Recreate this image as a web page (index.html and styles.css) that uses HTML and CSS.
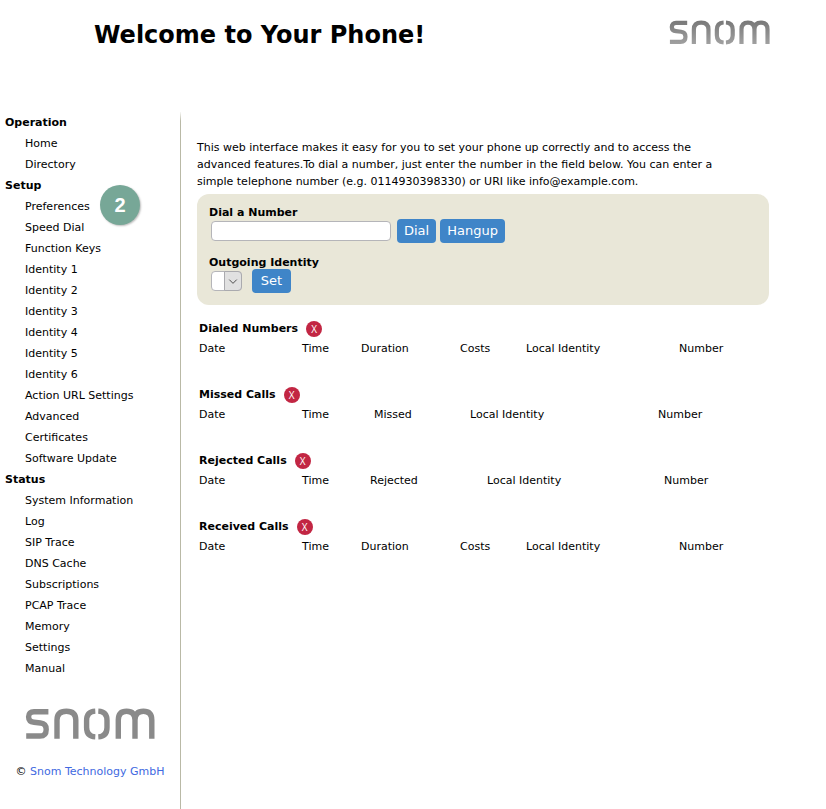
FILE: index.html
```
<!DOCTYPE html>
<html lang="en">
	<head>
		<title>Welcome to Your Phone!</title>
		<meta charset="UTF-8">
		<link rel="stylesheet" href="styles.css">
	</head>
	<body>
		<svg class="defs" width="0" height="0" aria-hidden="true">
			<linearGradient id="fade" x1="0" y1="0" x2="0" y2="32" gradientUnits="userSpaceOnUse">
				<stop offset="0" stop-color="#777"/>
				<stop offset="1" stop-color="#a2a2a2"/>
			</linearGradient>
			<symbol id="snom" viewBox="0 0 130 32">
				<path d="M23.4 3.7H9Q3.6 3.7 3.6 8.8Q3.6 13.8 9 14.3L15.5 15Q21.2 15.6 21.2 21.4Q21.2 28 15 28H1.2"/>
				<path d="M32 30.8V12Q32 3.2 41.4 3.2Q50.8 3.2 50.8 12V30.8"/>
				<path d="M70.3 3.1Q61.6 3.6 61.6 12.5V19.5Q61.6 28.4 70.3 28.9M73.3 3.1Q82 3.6 82 12.5V19.5Q82 28.4 73.3 28.9"/>
				<path d="M93.3 30.8V12Q93.3 3.2 101.6 3.2Q110 3.2 110 12V30.8M110 12Q110 3.2 118.4 3.2Q126.8 3.2 126.8 12V30.8"/>
			</symbol>
		</svg>

		<header class="header">
			<h1>Welcome to Your Phone!</h1>
			<svg class="logo logo-top" role="img" aria-label="snom"><use href="#snom"/></svg>
		</header>

		<div class="page">
			<nav class="menu">
				<h2>Operation</h2>
				<ul>
					<li><a href="#">Home</a></li>
					<li><a href="#">Directory</a></li>
				</ul>
				<h2>Setup</h2>
				<ul>
					<li class="marked"><a href="#">Preferences</a><span class="badge">2</span></li>
					<li><a href="#">Speed Dial</a></li>
					<li><a href="#">Function Keys</a></li>
					<li><a href="#">Identity 1</a></li>
					<li><a href="#">Identity 2</a></li>
					<li><a href="#">Identity 3</a></li>
					<li><a href="#">Identity 4</a></li>
					<li><a href="#">Identity 5</a></li>
					<li><a href="#">Identity 6</a></li>
					<li><a href="#">Action URL Settings</a></li>
					<li><a href="#">Advanced</a></li>
					<li><a href="#">Certificates</a></li>
					<li><a href="#">Software Update</a></li>
				</ul>
				<h2>Status</h2>
				<ul>
					<li><a href="#">System Information</a></li>
					<li><a href="#">Log</a></li>
					<li><a href="#">SIP Trace</a></li>
					<li><a href="#">DNS Cache</a></li>
					<li><a href="#">Subscriptions</a></li>
					<li><a href="#">PCAP Trace</a></li>
					<li><a href="#">Memory</a></li>
					<li><a href="#">Settings</a></li>
					<li><a href="#">Manual</a></li>
				</ul>
				<svg class="logo logo-menu" role="img" aria-label="snom"><use href="#snom"/></svg>
				<p class="copyright">© <a href="#">Snom Technology GmbH</a></p>
			</nav>

			<main class="content">
				<p class="intro">This web interface makes it easy for you to set your phone up correctly and to access the advanced features.To dial a number, just enter the number in the field below. You can enter a simple telephone number (e.g. 0114930398330) or URI like info@example.com.</p>

				<form class="dial">
					<label for="number">Dial a Number</label>
					<div class="row">
						<input type="text" id="number" name="number">
						<button type="button">Dial</button>
						<button type="button">Hangup</button>
					</div>
					<label for="identity">Outgoing Identity</label>
					<div class="row">
						<span class="select">
							<select id="identity" name="identity"><option></option></select>
							<svg class="arrow" viewBox="0 0 17 18" aria-hidden="true"><path d="M4.5 7.5L8.5 11.5L12.5 7.5"/></svg>
						</span>
						<button type="button">Set</button>
					</div>
				</form>

				<section class="calls">
					<h3>Dialed Numbers <button type="button" class="clear" aria-label="Clear dialed numbers">X</button></h3>
					<table>
						<tr><th class="date">Date</th><th class="time">Time</th><th class="duration">Duration</th><th class="costs">Costs</th><th class="local">Local Identity</th><th>Number</th></tr>
					</table>
				</section>
				<section class="calls">
					<h3>Missed Calls <button type="button" class="clear" aria-label="Clear missed calls">X</button></h3>
					<table class="missed">
						<tr><th class="date">Date</th><th class="time">Time</th><th class="count">Missed</th><th class="local">Local Identity</th><th>Number</th></tr>
					</table>
				</section>
				<section class="calls">
					<h3>Rejected Calls <button type="button" class="clear" aria-label="Clear rejected calls">X</button></h3>
					<table class="rejected">
						<tr><th class="date">Date</th><th class="time">Time</th><th class="count">Rejected</th><th class="local">Local Identity</th><th>Number</th></tr>
					</table>
				</section>
				<section class="calls">
					<h3>Received Calls <button type="button" class="clear" aria-label="Clear received calls">X</button></h3>
					<table>
						<tr><th class="date">Date</th><th class="time">Time</th><th class="duration">Duration</th><th class="costs">Costs</th><th class="local">Local Identity</th><th>Number</th></tr>
					</table>
				</section>
			</main>
		</div>
	</body>
</html>
```
FILE: styles.css
```
*{
	box-sizing:border-box;
}
body{
	margin:0;
	min-height:100vh;
	display:flex;
	flex-direction:column;
	background-color:white;
	color:black;
	font-family:Verdana, "DejaVu Sans", sans-serif;
	font-size:11px;
	line-height:17px;
}
h1, h2, h3, p, ul{
	margin:0;
	padding:0;
}
a{
	color:inherit;
	text-decoration:none;
}
a:hover{
	text-decoration:underline;
}
.defs{
	position:absolute;
}
.header{
	display:flex;
	justify-content:space-between;
	align-items:flex-start;
	height:112px;
	padding:20px 56px 0 94px;
}
.header h1{
	font-size:24px;
	line-height:30px;
}
.logo{
	display:block;
	fill:none;
	stroke:#8a8a8a;
	stroke-width:5.4;
}
.logo-top{
	width:101px;
	height:25px;
	stroke:url(#fade);
}
.logo-menu{
	width:130px;
	height:32px;
	margin:29px 0 0 25px;
}
.page{
	flex:1;
	display:flex;
}
.menu{
	width:181px;
	flex-shrink:0;
	border-right:1px solid;
	border-image:linear-gradient(white, #b9b9a6 10px) 1;
}
.menu h2{
	padding-left:5px;
	font-size:11px;
	line-height:21px;
}
.menu ul{
	list-style:none;
	padding-left:25px;
	line-height:21px;
}
.marked{
	position:relative;
}
.badge{
	position:absolute;
	left:75px;
	top:-11px;
	width:40px;
	height:40px;
	border-radius:50%;
	background-color:#77a797;
	box-shadow:1px 1px 2px #bbb;
	color:white;
	font:bold 20px/40px "Liberation Sans", Arial, sans-serif;
	text-align:center;
}
.copyright{
	margin-top:23px;
	text-align:center;
}
.copyright a{
	color:#4169e1;
}
.content{
	flex:1;
	padding:27px 57px 0 16px;
}
.intro{
	max-width:544px;
}
.dial{
	margin-top:4px;
	padding:12px 12px 12px;
	border-radius:12px;
	background-color:#e9e7d8;
}
.dial label{
	display:block;
	font-weight:bold;
	line-height:13px;
}
.row{
	display:flex;
	align-items:center;
	gap:4px;
	height:24px;
	padding-left:2px;
}
.row + label{
	margin-top:13px;
}
.row input{
	width:180px;
	height:20px;
	margin-right:2px;
	padding:0 4px;
	border:1px solid #b5b5b9;
	border-radius:4px;
	background-color:white;
	font:inherit;
}
.row button{
	min-width:39px;
	height:24px;
	padding:0 7px;
	border:0;
	border-radius:4px;
	background-color:#3f85c8;
	color:white;
	font:13px/24px Verdana, "DejaVu Sans", sans-serif;
}
.select{
	position:relative;
	margin-right:6px;
}
.select select{
	display:block;
	width:31px;
	height:20px;
	border:1px solid #b5b5b9;
	border-radius:4px;
	background-color:white;
	appearance:none;
}
.arrow{
	position:absolute;
	right:0;
	top:0;
	width:18px;
	height:20px;
	border:1px solid #aaaaae;
	border-radius:0 4px 4px 0;
	background-color:#e1e1e1;
	fill:none;
	stroke:#444;
	pointer-events:none;
}
.calls{
	height:66px;
	padding-left:2px;
}
.dial + .calls{
	margin-top:14px;
}
.calls h3{
	display:flex;
	align-items:center;
	gap:8px;
	height:19px;
	font-size:11px;
}
.clear{
	width:16px;
	height:16px;
	padding:0;
	border:0;
	border-radius:50%;
	background-color:#c22643;
	color:white;
	font:10px/16px "Open Sans", sans-serif;
}
.calls table{
	width:100%;
	table-layout:fixed;
	border-collapse:collapse;
}
.calls th{
	padding:2px 0 0;
	font-weight:normal;
	text-align:left;
}
.date{
	width:103px;
}
.time{
	width:59px;
}
.duration{
	width:99px;
}
.costs{
	width:66px;
}
.local{
	width:153px;
}
.missed .time{
	width:72px;
}
.missed .count{
	width:96px;
}
.missed .local{
	width:188px;
}
.rejected .time{
	width:68px;
}
.rejected .count{
	width:117px;
}
.rejected .local{
	width:177px;
}
```
